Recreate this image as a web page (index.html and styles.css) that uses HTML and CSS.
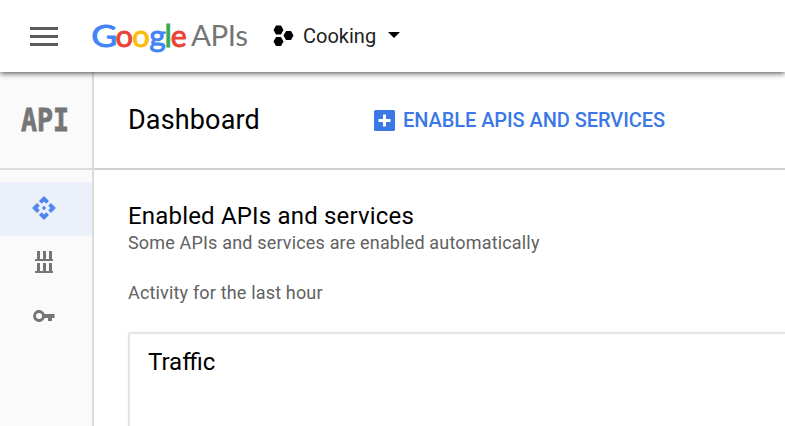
FILE: index.html
```html
<!DOCTYPE html>
<html lang="en">
<head>
<meta charset="utf-8">
<title>Google APIs</title>
<link rel="stylesheet" href="styles.css">
</head>
<body>
<header class="topbar">
  <div class="menu"><i></i><i></i><i></i></div>
  <svg class="logo" width="158" height="40" viewBox="0 0 158 40">
    <g class="google">
      <text class="cap" x="-.8" y="31.500" fill="#4285f4" stroke="#4285f4" textLength="26" lengthAdjust="spacingAndGlyphs">G</text>
      <text x="23.600" y="31.500" fill="#ea4335" stroke="#ea4335" textLength="17.500" lengthAdjust="spacingAndGlyphs">o</text>
      <text x="40.300" y="31.500" fill="#fbbc05" stroke="#fbbc05" textLength="17.500" lengthAdjust="spacingAndGlyphs">o</text>
      <text x="57.200" y="31.500" fill="#4285f4" stroke="#4285f4" textLength="16.500" lengthAdjust="spacingAndGlyphs">g</text>
      <text x="72.500" y="31.500" fill="#34a853" stroke="#34a853">l</text>
      <text x="78.800" y="31.500" fill="#ea4335" stroke="#ea4335" textLength="16" lengthAdjust="spacingAndGlyphs">e</text>
    </g>
    <text class="apis" x="99" y="31" textLength="57">APIs</text>
  </svg>
  <div class="project">
    <svg width="22" height="22" viewBox="0 0 22 22"><path d="M3 0.5h5l2.5 4.5L8 9.5H3L.5 5zM3 12h5l2.5 4.5L8 21H3L.5 16.500zM13 6h5l2.500 4.500L18 15h-5l-2.500-4.500z"/></svg>
    <span>Cooking</span>
    <svg class="caret" width="12" height="6" viewBox="0 0 12 6"><path d="M0 0h12L6 6z"/></svg>
  </div>
</header>
<div class="layout">
  <aside class="sidebar">
    <div class="product"><span>API</span></div>
    <nav>
      <a class="active"><svg width="26" height="26" viewBox="0 0 24 24"><path d="m14 12-2 2-2-2 2-2zM12 6l2.120 2.120 2.500-2.500L12 1 7.380 5.620l2.500 2.500zM6 12l2.120-2.120-2.500-2.500L1 12l4.620 4.620 2.500-2.500zM18 12l-2.120 2.120 2.500 2.500L23 12l-4.620-4.620-2.500 2.500zM12 18l-2.120-2.120-2.500 2.500L12 23l4.620-4.620-2.500-2.500z"/></svg></a>
      <a><svg width="18" height="22" viewBox="0 0 18 22"><path d="M2 0h3v8h3V0h3v8h3V0h3v8h1v2H0V8h2zM2 12h3v8h3v-8h3v8h3v-8h3v8h1v2H0v-2h2z"/></svg></a>
      <a><svg width="22" height="12" viewBox="0 0 22 12"><path fill-rule="evenodd" d="M11.700 4A6 6 0 1 0 11.700 8H15v3h4V8h2.500V4zM6 3a3 3 0 1 1 0 6 3 3 0 0 1 0-6z"/></svg></a>
    </nav>
  </aside>
  <main>
    <div class="toolbar">
      <h1>Dashboard</h1>
      <div class="enable">
        <svg width="21" height="21" viewBox="0 0 21 21"><rect width="21" height="21" rx="1.500" fill="#3b78e7"/><path d="M10.500 4.500v12M4.500 10.500h12" stroke="#fff" stroke-width="3"/></svg>
        <span>ENABLE APIS AND SERVICES</span>
      </div>
    </div>
    <section class="content">
      <h2>Enabled APIs and services</h2>
      <p class="sub">Some APIs and services are enabled automatically</p>
      <p class="activity">Activity for the last hour</p>
      <div class="card"><h3>Traffic</h3></div>
    </section>
  </main>
</div>
</body>
</html>
```
FILE: styles.css
```css
* { box-sizing: border-box; }
body { margin: 0; width: 785px; height: 426px; overflow: hidden; background: #fff; font-family: Roboto, sans-serif; color: #000; }
h1, h2, h3, p { margin: 0; font-weight: 400; white-space: nowrap; }
svg { display: block; flex: none; }
.topbar { position: relative; z-index: 1; display: flex; align-items: center; height: 72px; padding-left: 30px; background: #fff; box-shadow: 0 1px 6px rgba(0,0,0,.75); }
.menu { display: grid; gap: 5px; width: 28px; margin-right: 34px; }
.menu i { height: 3px; background: #5c5c5c; }
.logo { margin-top: -2px; overflow: visible; font-family: Lato, sans-serif; }
.google { font-size: 31px; stroke-width: .9px; }
.apis { font-size: 29.500px; fill: #757575; }
.project { display: flex; align-items: center; margin-left: 23px; font-size: 20px; line-height: 24px; color: #212121; }
.project span { margin-left: 8px; }
.caret { margin: -2px 0 0 12px; }
.layout { display: flex; height: 354px; }
.sidebar { width: 94px; flex: none; background: #fafafa; border-right: 2px solid #dcdcdc; }
.product { display: flex; align-items: center; height: 98px; border-bottom: 2px solid #dcdcdc; padding-left: 21px; }
.product span { font: 700 32px/38px "DejaVu Sans Mono", monospace; color: #757575; -webkit-text-stroke: .8px #757575; transform: scaleX(.83); transform-origin: left; }
nav { padding-top: 12px; }
nav a { display: flex; align-items: center; justify-content: center; height: 54px; padding: 0 4px 2px 0; fill: #757575; }
nav .active { background: #ebf0fa; fill: #4d87ec; }
main { display: flex; flex-direction: column; flex: 1; min-width: 0; }
.toolbar { display: flex; flex: none; align-items: center; height: 98px; border-bottom: 2px solid #d0d0d0; padding-left: 34px; }
h1 { width: 246px; font-size: 27px; line-height: 36px; letter-spacing: .15px; }
.enable { display: flex; align-items: center; gap: 8px; color: #3b78e7; font-size: 20px; font-weight: 500; line-height: 24px; letter-spacing: -.07px; white-space: nowrap; }
.content { display: flex; flex: 1; flex-direction: column; min-height: 0; padding: 30px 0 0 34px; }
h2 { font-size: 24px; line-height: 32px; letter-spacing: .18px; }
.sub, .activity { font-size: 18px; line-height: 24px; letter-spacing: .17px; color: #616161; }
.sub { margin-top: -1px; }
.activity { margin-top: 26px; }
.card { flex: 1; margin-top: 27px; padding: 12px 18px; border: 2px solid #e4e4e4; border-width: 2px 0 0 2px; border-radius: 3px 0 0; box-shadow: 0 0 2px rgba(0,0,0,.1); }
h3 { font-size: 24px; line-height: 32px; }
```
